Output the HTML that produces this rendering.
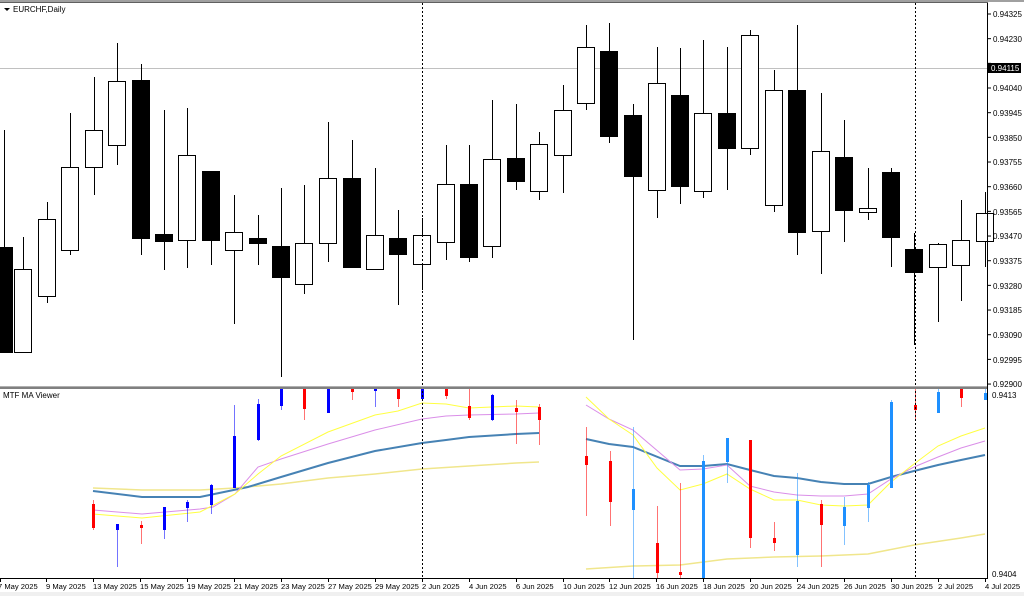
<!DOCTYPE html>
<html><head><meta charset="utf-8"><style>
html,body{margin:0;padding:0;background:#fff;width:1024px;height:596px;overflow:hidden}
svg{display:block}
text{font-family:"Liberation Sans",sans-serif;font-size:8px;fill:#000}
text.d{font-size:7.6px}
</style></head><body>
<svg id="s" width="1024" height="596" viewBox="0 0 1024 596" xmlns="http://www.w3.org/2000/svg">
<rect x="0" y="0" width="1024" height="596" fill="#fff"/>
<rect x="0" y="0" width="1024" height="2" fill="#a0a0a0"/>
<rect x="0" y="2" width="988" height="1" fill="#606060"/>
<line x1="0" y1="68.5" x2="988" y2="68.5" stroke="#c0c0c0" stroke-width="1"/>
<g id="candles"></g>
<g id="sub"></g>
<line x1="422.5" y1="3" x2="422.5" y2="579" stroke="#000" stroke-dasharray="2,2" stroke-width="1"/>
<line x1="915.5" y1="3" x2="915.5" y2="579" stroke="#000" stroke-dasharray="2,2" stroke-width="1"/>
<rect x="0" y="386" width="988" height="3" fill="#808080"/>
<rect x="0" y="386" width="988" height="1" fill="#b0b0b0"/>
<line x1="987.5" y1="3" x2="987.5" y2="579" stroke="#000"/>
<line x1="0" y1="578.5" x2="988" y2="578.5" stroke="#000"/>
<rect x="0" y="592" width="1024" height="4" fill="#f0f0f0"/>
<path d="M4 8 L10 8 L7 11 Z" fill="#000"/>
<text x="13" y="12">EURCHF,Daily</text>
<text x="3" y="398">MTF MA Viewer</text>
<g id="ticks"></g>
<text x="993" y="17">0.94325</text>
<text x="993" y="42">0.94230</text>
<text x="993" y="91">0.94040</text>
<text x="993" y="116">0.93945</text>
<text x="993" y="141">0.93850</text>
<text x="993" y="165">0.93755</text>
<text x="993" y="190">0.93660</text>
<text x="993" y="215">0.93565</text>
<text x="993" y="239">0.93470</text>
<text x="993" y="264">0.93375</text>
<text x="993" y="289">0.93280</text>
<text x="993" y="313">0.93185</text>
<text x="993" y="338">0.93090</text>
<text x="993" y="363">0.92995</text>
<text x="993" y="387">0.92900</text>
<rect x="988" y="63" width="33" height="10" fill="#000"/>
<text x="991" y="71" style="fill:#fff">0.94115</text>
<text x="992" y="398">0.9413</text>
<text x="992" y="577">0.9404</text>
<g>
<text class="d" x="-2" y="589">7 May 2025</text>
<text class="d" x="46" y="589">9 May 2025</text>
<text class="d" x="93" y="589">13 May 2025</text>
<text class="d" x="140" y="589">15 May 2025</text>
<text class="d" x="187" y="589">19 May 2025</text>
<text class="d" x="234" y="589">21 May 2025</text>
<text class="d" x="281" y="589">23 May 2025</text>
<text class="d" x="328" y="589">27 May 2025</text>
<text class="d" x="375" y="589">29 May 2025</text>
<text class="d" x="422" y="589">2 Jun 2025</text>
<text class="d" x="469" y="589">4 Jun 2025</text>
<text class="d" x="516" y="589">6 Jun 2025</text>
<text class="d" x="563" y="589">10 Jun 2025</text>
<text class="d" x="609" y="589">12 Jun 2025</text>
<text class="d" x="656" y="589">16 Jun 2025</text>
<text class="d" x="703" y="589">18 Jun 2025</text>
<text class="d" x="750" y="589">20 Jun 2025</text>
<text class="d" x="797" y="589">24 Jun 2025</text>
<text class="d" x="844" y="589">26 Jun 2025</text>
<text class="d" x="891" y="589">30 Jun 2025</text>
<text class="d" x="938" y="589">2 Jul 2025</text>
<text class="d" x="985" y="589">4 Jul 2025</text>
</g>
</svg>
<script>
var NS="http://www.w3.org/2000/svg";
function el(p,t,a){var e=document.createElementNS(NS,t);for(var k in a)e.setAttribute(k,a[k]);p.appendChild(e);return e;}
var C=[[4,0,247,352,130,352],[23,1,269,352,237,352],[47,1,219,296,202,303],[70,1,167,250,113,255],[94,1,130,167,77,195],[117,1,81,145,43,165],[141,0,80,238,64,255],[164,0,234,241,110,270],[187,1,155,240,108,268],[211,0,171,240,171,265],[234,1,232,250,195,324],[258,0,238,243,215,265],[281,0,246,277,188,377],[304,1,243,284,185,294],[328,1,178,243,122,262],[352,0,178,267,140,267],[375,1,235,269,168,270],[398,0,238,254,210,305],[422,1,235,264,218,290],[446,1,184,242,145,260],[469,0,184,257,145,262],[492,1,159,246,100,258],[516,0,158,181,104,190],[539,1,144,191,132,200],[563,1,110,155,85,193],[586,1,47,103,25,110],[609,0,51,136,23,143],[633,0,115,176,104,340],[657,1,83,190,47,218],[680,0,95,186,48,204],[703,1,113,191,40,198],[727,0,113,148,47,190],[750,1,35,148,30,155],[774,1,90,205,70,212],[797,0,90,232,25,255],[821,1,151,231,93,274],[844,0,157,210,120,242],[868,1,208,212,168,220],[891,0,172,237,168,267],[914,0,249,272,233,345],[938,1,244,267,243,322],[961,1,240,265,200,301],[985,1,213,241,192,267]];
var g=document.getElementById("candles");
C.forEach(function(c){var x=c[0];el(g,"line",{x1:x+.5,x2:x+.5,y1:c[4],y2:c[5],stroke:"#000"});
el(g,"rect",{x:x-8.5,y:c[2]+.5,width:17,height:c[3]-c[2],fill:c[1]?"#fff":"#000",stroke:"#000"});});
var s=document.getElementById("sub");
function pl(pts,col,w){el(s,"polyline",{points:pts,fill:"none",stroke:col,"stroke-width":w});}
pl("93,488 142,490 200,490 235,488 281,484 328,478 375,474 422,469 469,466 516,463 539,462","#f0e68c",1.5);
pl("586,569 633,566 680,565 727,559 774,557 821,556 868,554 914,545 961,538 985,534","#f0e68c",1.5);
pl("93,491 142,497 200,497 248,487 281,477 328,463 375,451 422,443 446,440 469,437 516,434 539,433","#4682b4",2);
pl("586,439 609,444 633,447 680,466 703,466 727,464 750,470 774,476 797,478 821,482 844,484 868,484 891,477 914,471 938,465 961,460 985,455","#4682b4",2);
pl("93,510 142,514 200,509 213,507 235,494 258,467 281,459 328,444 375,430 422,419 446,416 469,415 516,414 539,413","#da8ee8",1);
pl("586,405 609,419 633,430 680,470 703,469 727,465 750,486 774,492 797,495 821,496 844,496 868,494 891,479 914,467 938,457 961,448 985,441","#da8ee8",1);
pl("93,514 142,518 200,512 235,494 258,474 281,456 328,432 375,415 398,411 422,403 446,404 469,408 516,406 539,407","#ffff40",1);
pl("586,397 609,419 633,435 657,468 680,490 703,484 727,474 750,489 774,500 797,500 821,505 844,506 868,505 891,482 914,464 938,446 961,436 985,428","#ffff40",1);
var R="#ff0000",B="#0000ff",D="#1e90ff";
var bars=[[93,R,504,528,500,530],[117,B,524,530,524,567],[141,R,525,528,521,544],[164,B,507,530,507,539],[187,B,502,508,500,522],[211,B,485,505,484,514],[234,B,436,488,405,488],[258,B,404,440,399,441],[281,B,389,406,389,410],[304,R,389,409,389,420],[328,B,389,413,389,413],[352,R,389,392,389,400],[375,B,389,390,389,407],[398,R,389,399,389,407],[422,B,389,399,389,401],[446,R,389,396,389,399],[469,R,406,418,389,420],[492,B,395,420,394,421],[516,R,408,412,400,444],[539,R,407,420,404,445],
[586,R,456,465,427,516],[610,R,461,502,451,526],[633,D,489,510,427,578],[657,R,543,573,506,578],[680,R,572,575,483,578],[703,D,461,578,455,578],[727,D,438,462,438,483],[750,R,440,538,440,548],[774,R,538,543,522,551],[797,D,501,555,473,567],[821,R,504,525,500,567],[844,D,507,526,497,545],[868,D,485,508,482,522],[891,D,402,488,400,488],[915,R,405,410,389,420],[938,D,392,413,389,413],[961,R,389,398,389,407],[985,D,393,400,389,400]];
bars.forEach(function(b){el(s,"line",{x1:b[0]+.5,x2:b[0]+.5,y1:b[4],y2:b[5],stroke:b[1],"stroke-opacity":.55,"stroke-width":1});
el(s,"rect",{x:b[0]-1,y:b[2],width:3,height:Math.max(2,b[3]-b[2]),fill:b[1]});});
var t=document.getElementById("ticks");
for(var i=0;i<16;i++){var y=14+i*24.67;el(t,"line",{x1:988,x2:991,y1:y,y2:y,stroke:"#000"});}
[0,46,93,140,187,234,281,328,375,422,469,516,563,609,656,703,750,797,844,891,938,985].forEach(function(x){el(t,"line",{x1:x+.5,x2:x+.5,y1:579,y2:582,stroke:"#000"});});
</script>
</body></html>
